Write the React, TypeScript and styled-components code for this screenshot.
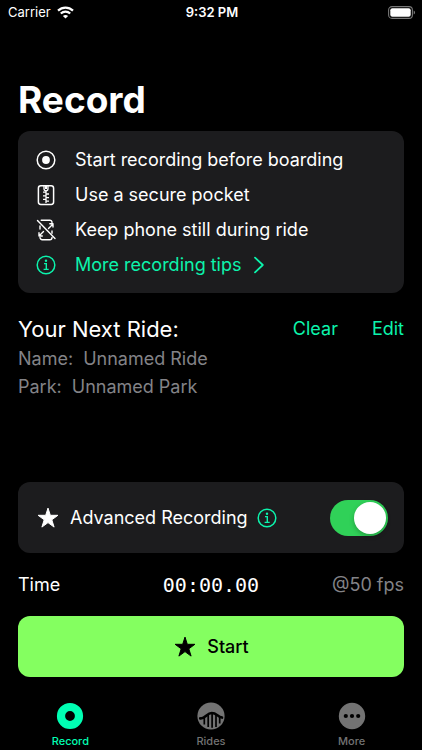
import React, { useState } from "react";
import styled, { createGlobalStyle } from "styled-components";

const mint = "#0cf3ac";
const card = "#1c1c1e";
const muted = "#838387";

const GlobalStyle = createGlobalStyle`
  *, *::before, *::after { box-sizing: border-box; }
  body {
    margin: 0;
    background: #000;
    color: #fff;
    font-family: Inter, "Liberation Sans", sans-serif;
    font-size: 18px;
    line-height: 28px;
  }
  button { font: inherit; color: inherit; background: none; border: 0; padding: 0; cursor: pointer; }
  a { color: inherit; text-decoration: none; }
  h1, h2, p, ul, dl, dd { margin: 0; padding: 0; }
  svg { display: block; flex: none; }
`;

const Screen = styled.div`
  min-height: 100vh;
  display: flex;
  flex-direction: column;
`;

const StatusBar = styled.header`
  display: grid;
  grid-template-columns: 1fr auto 1fr;
  align-items: center;
  height: 24px;
  padding: 0 6px 0 8px;
  font-size: 13px;
  line-height: 24px;
`;

const Carrier = styled.div`
  display: flex;
  align-items: center;
  gap: 6px;
`;

const Clock = styled.time`
  font-weight: 600;
`;

const Battery = styled.div`
  justify-self: end;
`;

const Main = styled.main`
  flex: 1;
  display: flex;
  flex-direction: column;
  padding: 52px 18px 0;
`;

const Title = styled.h1`
  font-size: 37px;
  line-height: 48px;
  font-weight: 700;
`;

const TipCard = styled.ul`
  list-style: none;
  margin-top: 7px;
  padding: 11px 18px;
  border-radius: 12px;
  background: ${card};
`;

const Tip = styled.li`
  display: flex;
  align-items: center;
  height: 35px;
  gap: 19px;
`;

const TipLink = styled.a`
  display: flex;
  align-items: center;
  gap: 19px;
  color: ${mint};
`;

const LinkText = styled.span`
  display: flex;
  align-items: center;
  gap: 12px;
`;

const RideHeader = styled.div`
  display: flex;
  align-items: center;
  margin-top: 20px;
`;

const RideTitle = styled.h2`
  flex: 1;
  font-size: 22px;
  line-height: 32px;
  font-weight: 400;
`;

const Actions = styled.div`
  display: flex;
  gap: 34px;
  color: ${mint};
`;

const Details = styled.dl`
  color: ${muted};
`;

const Detail = styled.div`
  display: flex;
  gap: 10px;
`;

const AdvancedCard = styled.section`
  display: flex;
  align-items: center;
  height: 71px;
  margin-top: auto;
  padding: 0 16px 0 18px;
  border-radius: 12px;
  background: ${card};
`;

const AdvancedLabel = styled.label`
  display: flex;
  align-items: center;
  gap: 10px;
`;

const InfoButton = styled.button`
  margin-left: 9px;
  color: ${mint};
`;

const Toggle = styled.input`
  appearance: none;
  display: flex;
  align-items: center;
  width: 58px;
  height: 36px;
  margin: 0 0 0 auto;
  padding: 2px;
  border-radius: 18px;
  background: #39393d;
  cursor: pointer;

  &::before {
    content: "";
    width: 32px;
    height: 32px;
    border-radius: 50%;
    background: #fff;
    box-shadow: 0 2px 5px rgba(0, 0, 0, 0.25);
  }
  &:checked {
    justify-content: flex-end;
    background: #30d158;
  }
`;

const TimeRow = styled.div`
  display: grid;
  grid-template-columns: 1fr auto 1fr;
  align-items: center;
  height: 63px;
`;

const Timer = styled.span`
  font-family: "DejaVu Sans Mono", "Liberation Mono", monospace;
  font-size: 20px;
`;

const FrameRate = styled.span`
  justify-self: end;
  color: ${muted};
`;

const StartButton = styled.button`
  display: flex;
  align-items: center;
  justify-content: center;
  gap: 10px;
  height: 61px;
  border-radius: 12px;
  background: #84ff60;
  color: #000;
  font-weight: 500;
`;

const TabBar = styled.nav`
  display: grid;
  grid-template-columns: repeat(3, 1fr);
  margin-top: 25px;
`;

const Tab = styled.button<{ $active?: boolean }>`
  display: flex;
  flex-direction: column;
  align-items: center;
  gap: 3px;
  height: 48px;
  font-size: 11px;
  line-height: 16px;
  font-weight: 500;
  color: ${(p) => (p.$active ? "#00ffb3" : "#737373")};
`;

const WifiIcon = () => (
  <svg width="17" height="13" viewBox="0 0 17 13" fill="none" stroke="#fff" strokeWidth="2.2" aria-hidden="true">
    <path d="M1 4.6C5.3.5 11.7.5 16 4.6" />
    <path d="M3.8 7.5c2.7-2.6 6.7-2.6 9.4 0" />
    <path d="M8.5 12.6 5.9 10c1.5-1.4 3.7-1.4 5.2 0z" fill="#fff" stroke="none" />
  </svg>
);

const BatteryIcon = () => (
  <svg width="28" height="13" viewBox="0 0 28 13" role="img" aria-label="Battery full">
    <rect x=".6" y=".6" width="23.8" height="11.8" rx="3.4" fill="none" stroke="#777" strokeWidth="1.1" />
    <rect x="2.3" y="2.2" width="20.4" height="8.6" rx="2" fill="#fff" />
    <path d="M25.7 4.4c1.8.7 1.8 3.5 0 4.2z" fill="#777" />
  </svg>
);

const TargetIcon = () => (
  <svg width="20" height="22" viewBox="0 0 20 22" aria-hidden="true">
    <circle cx="10" cy="11" r="8.8" fill="none" stroke="#fff" strokeWidth="1.5" />
    <circle cx="10" cy="11" r="3.9" fill="#fff" />
  </svg>
);

const ZipIcon = () => (
  <svg width="20" height="22" viewBox="0 0 20 22" fill="none" stroke="#fff" aria-hidden="true">
    <rect x="2.4" y="1.8" width="15.2" height="18.6" rx="2.4" strokeWidth="1.5" />
    <path d="M8 1.5v3.3a2 2 0 0 0 4 0V1.5" strokeWidth="1.3" />
    <path d="M10 1v4" strokeWidth="2" />
    <path d="M10 6.5V19M7 8.2h3M10 10h3M7 11.8h3M10 13.6h3M7 15.4h3M10 17.2h3" strokeWidth="1.3" />
  </svg>
);

const PhoneStillIcon = () => (
  <svg width="20" height="22" viewBox="0 0 20 22" fill="none" stroke="#fff" strokeWidth="1.4" strokeLinecap="round" strokeLinejoin="round" aria-hidden="true">
    <path d="M5.2 1.2h8.6a2.2 2.2 0 0 1 2.2 2.2M4 18.5a2.2 2.2 0 0 0 2.2 2.2h7.6a2.2 2.2 0 0 0 2.2-2.2" />
    <path d="M4 7v3M16 12v2.2" />
    <path d="M12.5 9.5 17 5M13.8 4.8H17V8M7.5 12.5 3 17M3 13.8V17h3.3" />
    <path d="m1.5 1.5 17.5 18" />
  </svg>
);

const InfoIcon = () => (
  <svg width="20" height="22" viewBox="0 0 20 22" fill="none" stroke="currentColor" strokeWidth="1.5" aria-hidden="true">
    <circle cx="10" cy="11" r="8.8" />
    <path d="M8 9.6h2.3v5.6M7.6 15.4h5.1" strokeWidth="1.4" />
    <circle cx="10" cy="6.8" r="1.2" fill="currentColor" stroke="none" />
  </svg>
);

const ChevronIcon = () => (
  <svg width="10" height="18" viewBox="0 0 10 18" fill="none" stroke="currentColor" strokeWidth="1.8" strokeLinecap="round" strokeLinejoin="round" aria-hidden="true">
    <path d="M1 1.6 8.8 9 1 16.4" />
  </svg>
);

const StarIcon = () => (
  <svg width="24" height="24" viewBox="0 0 24 24" fill="currentColor" stroke="currentColor" strokeWidth="1" strokeLinejoin="round" aria-hidden="true">
    <path d="m12 2.1 2.3 7.2h7.6l-6.1 4.5 2.3 7.3-6.1-4.5-6.1 4.5 2.3-7.3-6.1-4.5h7.6z" />
  </svg>
);

const RecordTabIcon = () => (
  <svg width="28" height="28" viewBox="0 0 28 28" aria-hidden="true">
    <circle cx="14" cy="14" r="9" fill="none" stroke="currentColor" strokeWidth="8.2" />
  </svg>
);

const CoasterIcon = () => (
  <svg width="28" height="28" viewBox="0 0 28 28" fill="none" stroke="#000" aria-hidden="true">
    <circle cx="14" cy="14" r="13.6" fill="currentColor" stroke="none" />
    <path d="M3.2 16.4c5 .8 6.6-5.4 11.6-5.4 4.6 0 5.8 3.6 10.2 4.6" strokeWidth="2.6" strokeLinecap="round" />
    <path d="M7.3 15.5v7M11.2 12.5V25M15.1 11v14.8M19 12.5V25M22.7 14.5v7" strokeWidth="1.7" />
  </svg>
);

const MoreIcon = () => (
  <svg width="28" height="28" viewBox="0 0 28 28" aria-hidden="true">
    <circle cx="14" cy="14" r="13.2" fill="currentColor" />
    <circle cx="7.8" cy="14" r="2.1" />
    <circle cx="14" cy="14" r="2.1" />
    <circle cx="20.2" cy="14" r="2.1" />
  </svg>
);

export default function App() {
  const [advanced, setAdvanced] = useState(true);

  return (
    <Screen>
      <GlobalStyle />
      <StatusBar>
        <Carrier>
          Carrier <WifiIcon />
        </Carrier>
        <Clock>9:32 PM</Clock>
        <Battery>
          <BatteryIcon />
        </Battery>
      </StatusBar>
      <Main>
        <Title>Record</Title>
        <TipCard>
          <Tip><TargetIcon />Start recording before boarding</Tip>
          <Tip><ZipIcon />Use a secure pocket</Tip>
          <Tip><PhoneStillIcon />Keep phone still during ride</Tip>
          <Tip>
            <TipLink href="#tips">
              <InfoIcon />
              <LinkText>More recording tips <ChevronIcon /></LinkText>
            </TipLink>
          </Tip>
        </TipCard>
        <RideHeader>
          <RideTitle>Your Next Ride:</RideTitle>
          <Actions>
            <button type="button">Clear</button>
            <button type="button">Edit</button>
          </Actions>
        </RideHeader>
        <Details>
          <Detail><dt>Name:</dt><dd>Unnamed Ride</dd></Detail>
          <Detail><dt>Park:</dt><dd>Unnamed Park</dd></Detail>
        </Details>
        <AdvancedCard>
          <AdvancedLabel htmlFor="advanced">
            <StarIcon />
            Advanced Recording
          </AdvancedLabel>
          <InfoButton type="button" aria-label="About advanced recording">
            <InfoIcon />
          </InfoButton>
          <Toggle
            id="advanced"
            type="checkbox"
            role="switch"
            checked={advanced}
            onChange={(e) => setAdvanced(e.target.checked)}
          />
        </AdvancedCard>
        <TimeRow>
          <span>Time</span>
          <Timer>00:00.00</Timer>
          <FrameRate>@50 fps</FrameRate>
        </TimeRow>
        <StartButton type="button">
          <StarIcon />
          Start
        </StartButton>
      </Main>
      <TabBar>
        <Tab type="button" $active aria-current="page"><RecordTabIcon />Record</Tab>
        <Tab type="button"><CoasterIcon />Rides</Tab>
        <Tab type="button"><MoreIcon />More</Tab>
      </TabBar>
    </Screen>
  );
}
